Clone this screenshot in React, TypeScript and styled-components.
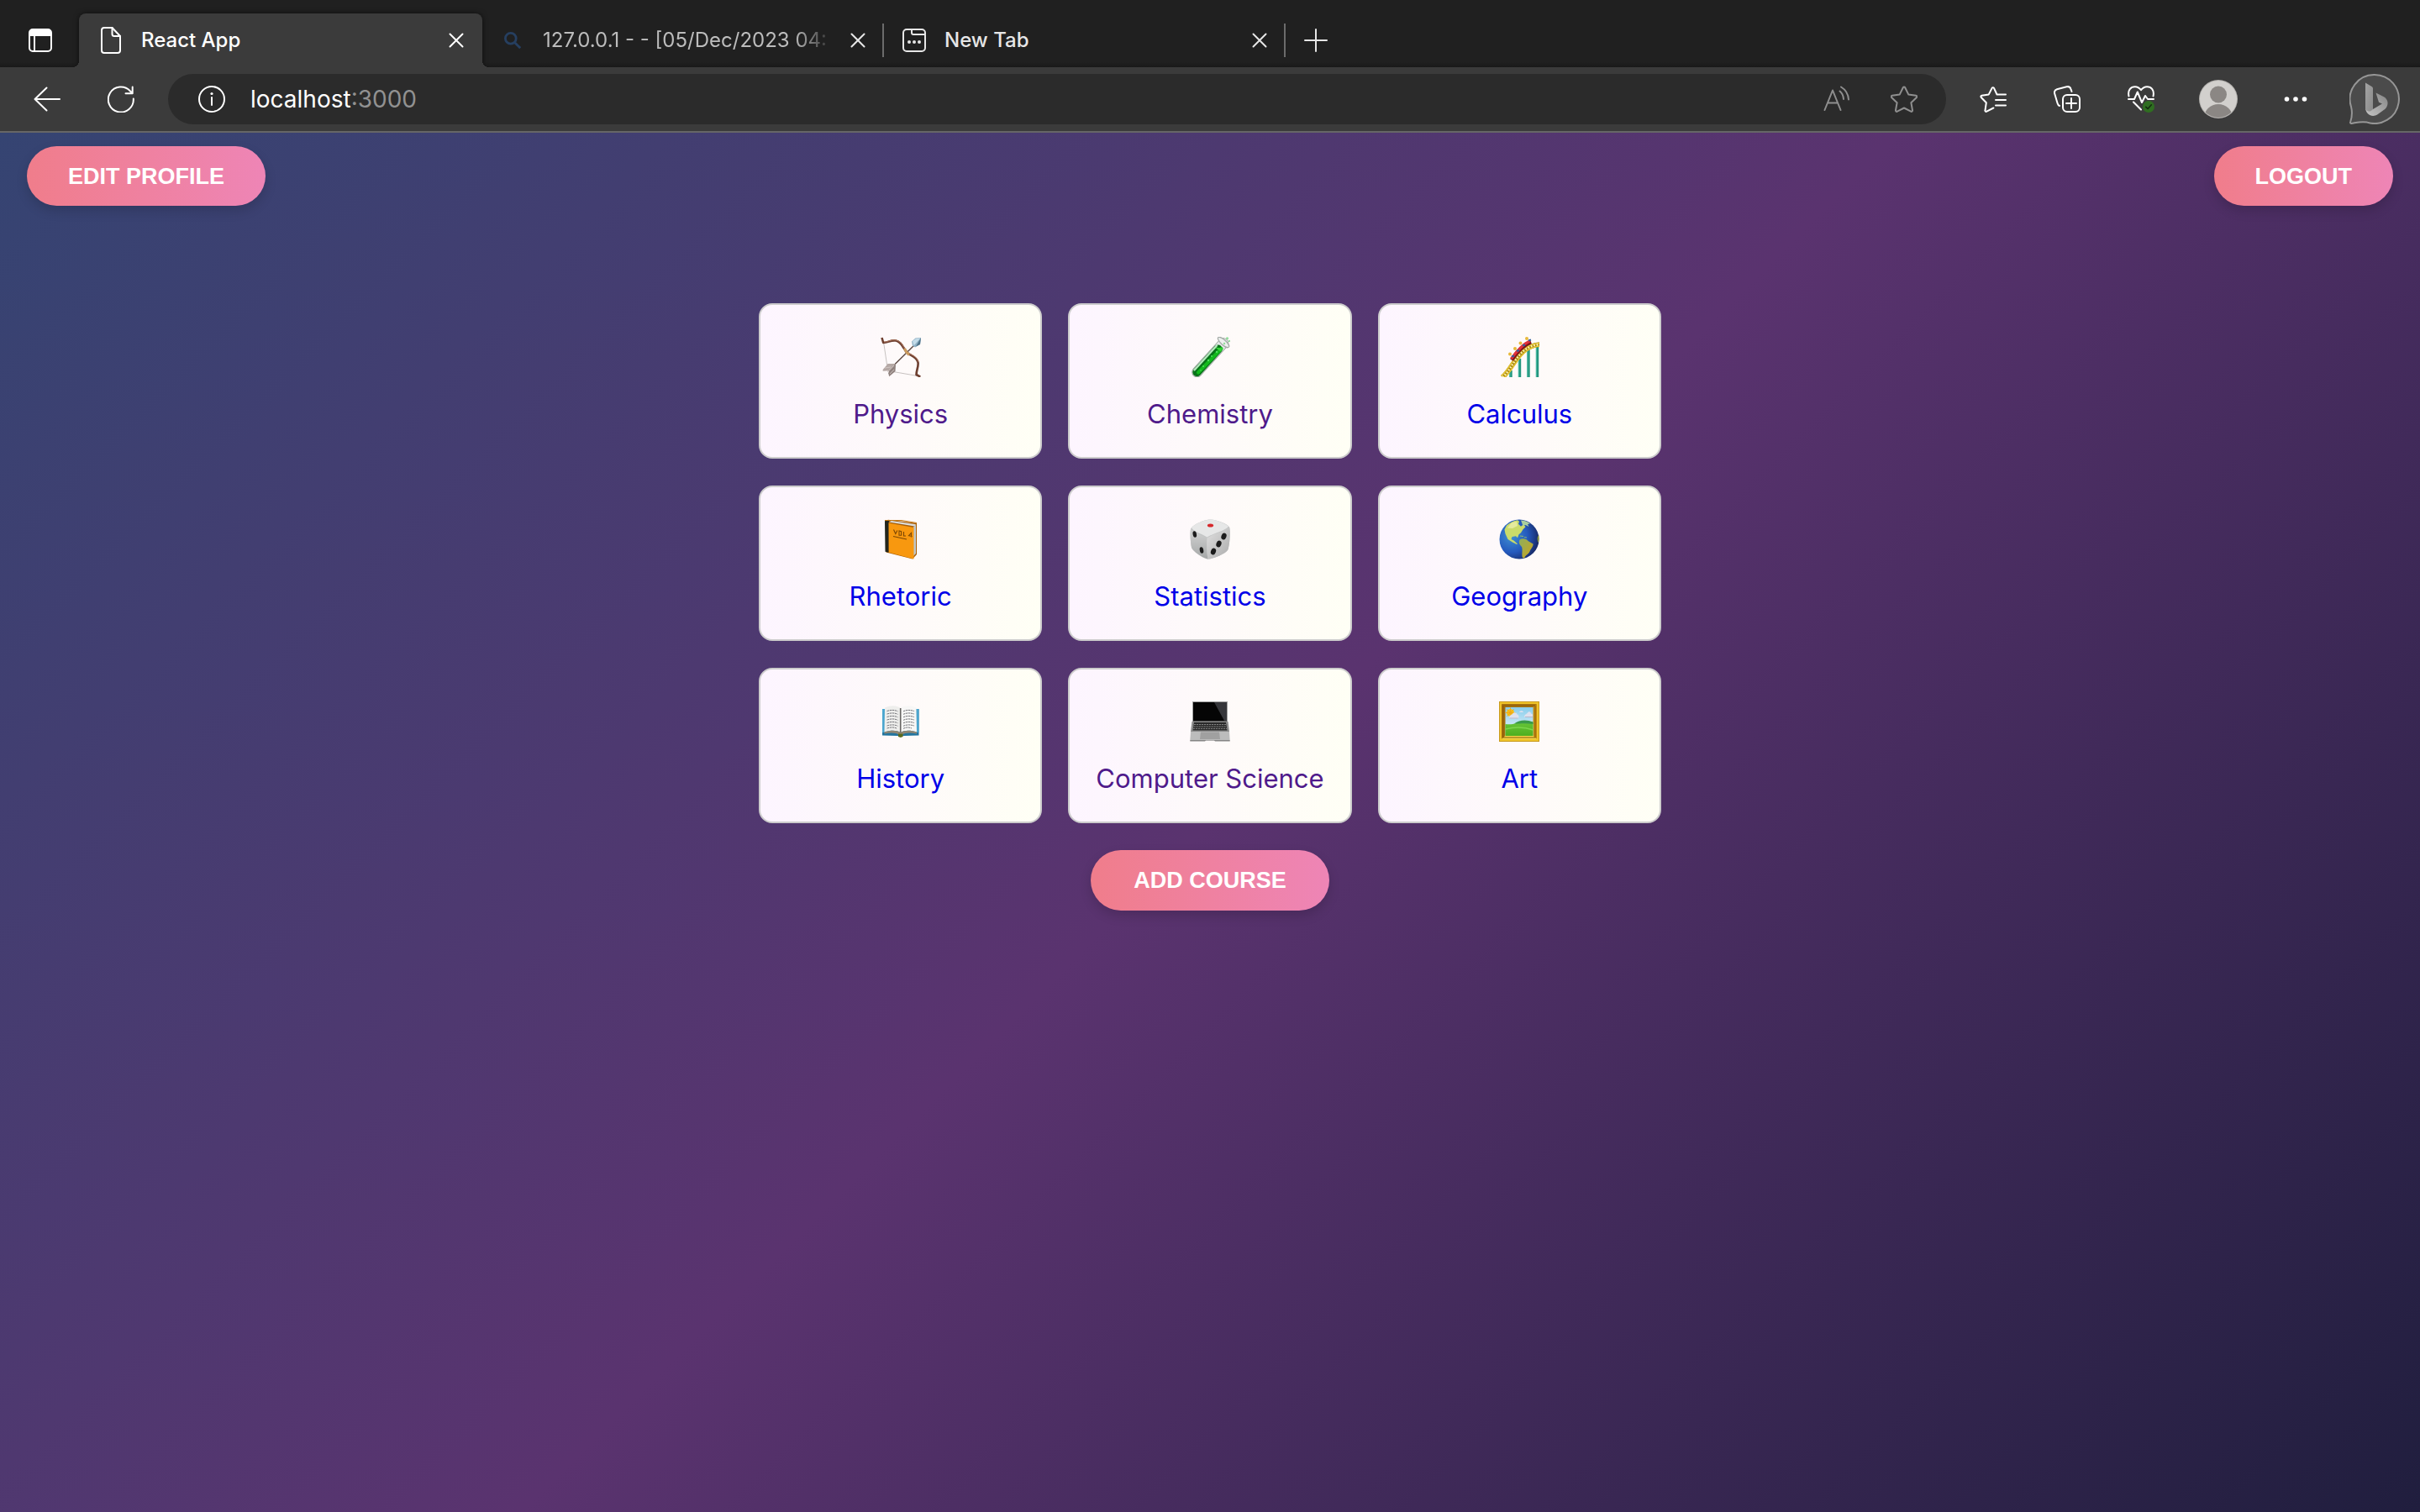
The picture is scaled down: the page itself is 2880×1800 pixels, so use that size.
import React from "react";
import styled, { createGlobalStyle, css } from "styled-components";

const uiFont = `Inter, "Liberation Sans", sans-serif`;

const GlobalStyle = createGlobalStyle`
  * { box-sizing: border-box; }
  html, body, #root { height: 100%; }
  body { margin: 0; font-family: ${uiFont}; background: #211f3f; }
  button, input { font-family: inherit; }
`;

const Window = styled.div`
  display: flex;
  flex-direction: column;
  min-height: 100vh;
`;

/* ---------- browser chrome ---------- */

const TabStrip = styled.header`
  display: flex;
  height: 80px;
  background: linear-gradient(to top, #191919, #202020 6px);
  overflow: hidden;
`;

const IconButton = styled.button<{ $w?: number; $color?: string }>`
  display: flex;
  flex: none;
  align-items: center;
  justify-content: center;
  width: ${(p) => p.$w ?? 32}px;
  padding: 0;
  border: 0;
  background: none;
  color: ${(p) => p.$color ?? "#ffffff"};
  cursor: pointer;
`;

const StripButton = styled(IconButton)`
  padding: 16px 0 0 2px;
`;

const activeTab = css`
  width: 480px;
  padding-left: 22px;
  padding-right: 15px;
  background: #3b3b3b;
  color: #ffffff;
  border-radius: 8px 8px 0 0;
  box-shadow: 0 0 6px rgba(0, 0, 0, 0.6);

  &::before,
  &::after {
    content: "";
    position: absolute;
    bottom: 0;
    width: 8px;
    height: 8px;
  }
  &::before {
    left: -8px;
    background: radial-gradient(circle at 0 0, transparent 8px, #3b3b3b 8px);
  }
  &::after {
    right: -8px;
    background: radial-gradient(circle at 100% 0, transparent 8px, #3b3b3b 8px);
  }
`;

const restingTab = css`
  width: 478px;
  padding-left: 20px;
  color: #e6e6e6;

  &::after {
    content: "";
    width: 2px;
    height: 40px;
    margin-left: 13px;
    background: #6b6b6b;
  }
`;

const Tab = styled.div<{ $active?: boolean }>`
  position: relative;
  display: flex;
  align-items: center;
  height: 64px;
  margin-top: 16px;
  ${(p) => (p.$active ? activeTab : restingTab)}
`;

const TabIcon = styled.span`
  display: flex;
  flex: none;
  justify-content: center;
  width: 32px;
  margin-right: 20px;
`;

const TabTitle = styled.span<{ $faded?: boolean }>`
  flex: 1;
  min-width: 0;
  margin-right: 12px;
  overflow: hidden;
  white-space: nowrap;
  font-size: 24px;
  font-weight: 500;
  line-height: 32px;
  ${(p) =>
    p.$faded &&
    css`
      color: #bcbcbc;
      font-weight: 400;
      mask-image: linear-gradient(to left, transparent, #000 48px);
    `}
`;

const Toolbar = styled.nav`
  position: relative;
  display: flex;
  align-items: stretch;
  height: 78px;
  padding: 0 4px 0 12px;
  background: #3b3b3b;
  border-bottom: 2px solid #666666;
`;

const AddressBar = styled.form`
  display: flex;
  flex: 1;
  align-items: center;
  height: 60px;
  margin: 8px 12px 0;
  padding: 0 34px 0 36px;
  border-radius: 30px;
  background: #2b2b2b;
`;

const AddressField = styled.label`
  display: flex;
  flex: 1;
  align-items: center;
  margin-left: 30px;
  font-size: 28px;
  line-height: 36px;
  color: #919191;
`;

const AddressInput = styled.input`
  field-sizing: content;
  padding: 0;
  border: 0;
  outline: 0;
  background: none;
  font-size: 28px;
  line-height: 36px;
  color: #ffffff;
`;

const AddressActions = styled.div`
  display: flex;
  gap: 48px;
`;

/* ---------- page ---------- */

const Page = styled.main`
  display: flex;
  flex: 1;
  flex-direction: column;
  align-items: center;
  background: linear-gradient(135deg, #354472 0%, #5a336f 50%, #201e3e 100%);
`;

const PageHeader = styled.div`
  display: flex;
  justify-content: space-between;
  align-self: stretch;
  padding: 16px 32px;
`;

const PillButton = styled.button<{ $large?: boolean }>`
  height: ${(p) => (p.$large ? 72 : 71)}px;
  padding: 0 ${(p) => (p.$large ? 51 : 49)}px;
  border: 0;
  border-radius: 36px;
  background: linear-gradient(90deg, #f07d8b, #ee85b6);
  box-shadow: 0 6px 14px rgba(0, 0, 0, 0.15);
  color: #ffffff;
  font-family: "Liberation Sans", Arial, sans-serif;
  font-size: 27px;
  font-weight: 700;
  line-height: 32px;
  text-transform: uppercase;
  cursor: pointer;
`;

const CourseGrid = styled.div`
  display: grid;
  grid-template-columns: repeat(3, 1fr);
  gap: 32px 31px;
  width: 100%;
  max-width: 1074px;
  margin: 100px 0 32px;
`;

const CourseCard = styled.a<{ $visited?: boolean }>`
  display: flex;
  flex-direction: column;
  align-items: center;
  gap: 24px;
  padding: 38px 16px 31px;
  border: 2px solid #cccccc;
  border-radius: 16px;
  background: linear-gradient(90deg, #fdf5ff, #fffff5);
  color: ${(p) => (p.$visited ? "#4f1a8b" : "#0000e8")};
  font-size: 31px;
  line-height: 40px;
  text-decoration: none;
  white-space: nowrap;
`;

/* ---------- chrome icons ---------- */

type IconProps = { w?: number; h?: number; sw?: number; children: React.ReactNode };

const Line = ({ w = 32, h = 32, sw = 2, children }: IconProps) => (
  <svg
    width={w}
    height={h}
    viewBox={`0 0 ${w} ${h}`}
    fill="none"
    stroke="currentColor"
    strokeWidth={sw}
    strokeLinecap="round"
    strokeLinejoin="round"
    aria-hidden="true"
  >
    {children}
  </svg>
);

const CloseIcon = () => (
  <Line w={18} h={18}>
    <path d="M1.500 1.500l15 15M16.500 1.500l-15 15" />
  </Line>
);

const SidebarIcon = () => (
  <Line w={28} h={28}>
    <rect x="1" y="1" width="26" height="26" rx="4" />
    <path d="M2 5a3 3 0 013-3h18a3 3 0 013 3v3H2z" fill="currentColor" />
    <path d="M7 9v18" />
  </Line>
);

const FileIcon = () => (
  <Line w={24} h={32}>
    <path d="M4 1h9.500l9.500 10v17a3 3 0 01-3 3H4a3 3 0 01-3-3V4a3 3 0 013-3z" />
    <path d="M13.500 1v7.500a2.500 2.500 0 002.500 2.500h7" />
  </Line>
);

const SearchIcon = () => (
  <svg width="20" height="20" viewBox="0 0 20 20" fill="none" stroke="#263f60" strokeWidth="2.800" aria-hidden="true">
    <circle cx="7.800" cy="7.800" r="6.400" />
    <path d="M12.400 12.400l6.800 6.800" />
  </svg>
);

const NewTabIcon = () => (
  <Line w={28} h={28}>
    <rect x="1" y="1" width="26" height="26" rx="4" />
    <path d="M11 1v4a2 2 0 002 2h14" />
    <g fill="currentColor" stroke="none">
      <circle cx="8" cy="16" r="2" />
      <circle cx="14" cy="16" r="2" />
      <circle cx="20" cy="16" r="2" />
    </g>
  </Line>
);

const PlusIcon = () => (
  <Line w={28} h={28}>
    <path d="M14 1v26M1 14h26" />
  </Line>
);

const BackIcon = () => (
  <Line>
    <path d="M15.500 2.500L1.500 16l14 13.500M2 16h29" />
  </Line>
);

const ReloadIcon = () => (
  <Line>
    <path d="M30.800 15.500A15 15 0 1 1 27 6.500L29.500 9M29.700 1.500V9.200H21.500" />
  </Line>
);

const InfoIcon = () => (
  <Line>
    <circle cx="16" cy="16" r="15" />
    <path d="M16 14v9" />
    <circle cx="16" cy="9.500" r="1.600" fill="currentColor" stroke="none" />
  </Line>
);

const ReadAloudIcon = () => (
  <Line>
    <path d="M1.500 29L11 5.500 20.500 29M5 20.500h12" />
    <path d="M19.500 6.500c2.500 2 4.200 5 4.500 9.500M21 1.500c5 3 8.500 8 9 15" />
  </Line>
);

const StarIcon = () => (
  <Line>
    <path d="M14.800 2.200c.5-1 1.900-1 2.400 0l4 8.200 9 1.300c1.100.2 1.500 1.500.7 2.300l-6.500 6.300 1.600 9c.2 1.100-1 1.900-1.900 1.400L16 26.500l-8.100 4.200c-.9.500-2.100-.3-1.900-1.400l1.600-9L1.100 14c-.8-.8-.4-2.100.7-2.300l9-1.300z" />
  </Line>
);

const FavoritesIcon = () => (
  <Line>
    <path d="M20.500 10.500L17 2.900c-.5-1-1.900-1-2.400 0l-3.800 7.500-8.300 1.300c-1.100.2-1.500 1.500-.7 2.300l6 6.300-1.300 9c-.2 1.100.9 1.900 1.900 1.400l8-4.200M20.500 10.500H31M19 17h12M19 23.500h12" />
  </Line>
);

const CollectionsIcon = () => (
  <Line>
    <rect x="11" y="11" width="20" height="20" rx="5" />
    <path d="M21 15v12M15 21h12" />
    <path d="M7 24c-1.300-.5-2-1.500-2.400-3L1.200 9.500C.5 7 1.800 5 4 4.300L15.500 1.300c2.500-.6 4.300.6 5 2.800L21.500 7" />
  </Line>
);

const HealthIcon = () => (
  <Line>
    <path d="M1.500 12.500C-.2 5 4 1.200 8.800 1.200c3 0 5.300 1.500 7.200 4 1.900-2.500 4.200-4 7.200-4 4.800 0 9 3.800 7.300 11.300" />
    <path d="M1 16h7l3.800-8.500L17 20l4-8 3 4h7M7 19.500l9 9" />
    <circle cx="25" cy="25" r="7" fill="#2f6e21" stroke="none" />
    <path d="M21.800 25.300l2.300 2.200 4.200-4.700" stroke="#142c10" strokeWidth="1.600" />
  </Line>
);

const AvatarIcon = () => (
  <svg width="46" height="46" viewBox="0 0 46 46" aria-hidden="true">
    <defs>
      <clipPath id="avatar">
        <circle cx="23" cy="23" r="22" />
      </clipPath>
    </defs>
    <circle cx="23" cy="23" r="23" fill="#b4b2af" />
    <circle cx="23" cy="23" r="22" fill="#d2d0cd" />
    <circle cx="23" cy="17.500" r="10" fill="#8b8784" />
    <ellipse cx="23" cy="45" rx="17" ry="16" fill="#8b8784" clipPath="url(#avatar)" />
  </svg>
);

const DotsIcon = () => (
  <svg width="28" height="8" viewBox="0 0 28 8" fill="currentColor" aria-hidden="true">
    <circle cx="3.500" cy="4" r="2.800" />
    <circle cx="14" cy="4" r="2.800" />
    <circle cx="24.500" cy="4" r="2.800" />
  </svg>
);

const BingIcon = () => (
  <svg width="60" height="60" viewBox="0 0 60 60" aria-hidden="true">
    <defs>
      <linearGradient id="bing" x1="0" y1="0" x2="1" y2="1">
        <stop offset="0" stopColor="#a4a4a4" />
        <stop offset="1" stopColor="#8a8a8a" />
      </linearGradient>
      <linearGradient id="bingTail" x1="0" y1="1" x2="1" y2="0">
        <stop offset="0" stopColor="#c4c4c4" />
        <stop offset="1" stopColor="#858585" />
      </linearGradient>
    </defs>
    <path
      d="M30 1a29 29 0 1 1-9 56.600c-7-1.500-13 .4-18.600 1.300C1 59.200.8 58 1.200 57c2-6 2.300-12 .8-18A29 29 0 0 1 30 1z"
      fill="#4b4b4b"
      stroke="#969696"
      strokeWidth="2"
    />
    <path d="M31.500 22.500l9.500 4.800c5.500 3 6 10 1.500 14.500l-9 6.500c-6.500 4-13.500 0-14.500-7l9 .8 11-6.500-4-1.800z" fill="url(#bingTail)" />
    <path d="M19 10.500l7.500 4.500c1 .6 1.500 1.400 1.500 2.500v24.500c-3 3.500-7 3.500-9-.5z" fill="url(#bing)" />
  </svg>
);

/* ---------- course pictures ---------- */

const Picture = ({ children }: { children: React.ReactNode }) => (
  <svg width="48" height="48" viewBox="0 0 48 48" fill="none" aria-hidden="true">
    {children}
  </svg>
);

const BowArrow = () => (
  <Picture>
    <path d="M3.700 7.300L7.700 34M16 41.700L44 46.500" stroke="#b9b4b2" strokeWidth=".8" />
    <path d="M1.500 1l1.700 6C9 7 12 3.600 18 4.500c8 1.500 8 9.500 14.500 15 4.500 3.500 10.500 4.500 12 11 .9 4.500-2 9.500-2 14.500l4.800 2.700" stroke="#6d3f30" strokeWidth="2.600" strokeLinejoin="round" />
    <path d="M4 6.200C9 6 12 2.900 18 3.800c8 1.500 8.500 9.500 15 15 4.500 3.500 10.500 4.500 12 11" stroke="#b07a62" strokeWidth="1" />
    <path d="M9 40.500L40.500 9.500" stroke="#5a4640" strokeWidth="1.400" />
    <path d="M28.500 14c1 3 3 5.500 5.500 7.500" stroke="#c99a5e" strokeWidth="3.200" />
    <path d="M37 5.500l4.500-4L48 1l-1 8-6 3.500-3-2z" fill="#8fb0c4" />
    <path d="M38 5l4-2.800L47.500 1.500l-8 9z" fill="#c3dce9" />
    <path d="M42 11.500L48 1l-1 8z" fill="#4f7388" />
    <path d="M2.700 39l6-7H18l-8 8.300-7.300.5z" fill="#b5a8a5" />
    <path d="M10 40.500l8-8-.5 8.500-7.300 6.300-1-4z" fill="#918380" />
    <path d="M8 42l8-8M5 37l7-1M11 44l5-5" stroke="#d5cbc8" strokeWidth=".8" />
  </Picture>
);

const TestTube = () => (
  <Picture>
    <path d="M8.500 42L40 7.500" stroke="#8d9690" strokeWidth="12.400" strokeLinecap="round" />
    <path d="M8.500 42L40 7.500" stroke="#e4e8e6" strokeWidth="11" strokeLinecap="round" />
    <path d="M8.500 42L33.500 14.600" stroke="#087319" strokeWidth="10.400" strokeLinecap="round" />
    <path d="M10 42.500L37.500 14" stroke="#12b91c" strokeWidth="4" strokeLinecap="round" />
    <path d="M30 12.500l9.500 1-3 4z" fill="#35d437" />
    <path d="M5.500 39.500L32 10.500" stroke="#b5e6bd" strokeWidth="2.200" strokeLinecap="round" />
    <g fill="#4ce25e">
      <circle cx="16" cy="35" r="1" />
      <circle cx="22" cy="28" r="1.200" />
      <circle cx="26" cy="23" r="1" />
      <circle cx="32" cy="18" r="1.200" />
      <circle cx="13" cy="40" r=".8" />
    </g>
    <ellipse cx="40" cy="6.500" rx="8.500" ry="3" transform="rotate(42 40 6.500)" fill="#edf0ee" stroke="#a3aaa6" strokeWidth="1.200" />
    <circle cx="44.500" cy="1.800" r="1.600" fill="#93dd9c" />
    <circle cx="47" cy="5" r="1.200" fill="#93dd9c" />
    <circle cx="41" cy="8" r="1.200" fill="#93dd9c" />
  </Picture>
);

const RollerCoaster = () => (
  <Picture>
    <path d="M14 40v8M24.500 26v22M35 15v33M45.500 10v38" stroke="#24967f" strokeWidth="3.400" />
    <path d="M13 40v8M23.500 26v22M34 15v33M44.500 10v38" stroke="#4dbda5" strokeWidth=".9" />
    <path d="M4 48C17 38 22 11 48.500 9" stroke="#a88710" strokeWidth="5.800" />
    <path d="M2.500 46.500C15 37 20 10 48 7.500M6 48.500C19 40 24 13 48.500 11" stroke="#e9c834" strokeWidth="1.400" />
    <path d="M4 48C17 38 22 11 48.500 9" stroke="#fff2ae" strokeWidth="2.400" strokeDasharray="1.800 1.800" />
    <path d="M15 27.500C20 20 28 10 38 6" stroke="#7c1418" strokeWidth="4.600" />
    <path d="M14.500 26C20 18.500 27 9.500 36.500 5" stroke="#e0303a" strokeWidth="3.200" />
    <g fill="#e8b93a">
      <circle cx="13" cy="20.500" r="2" />
      <circle cx="19" cy="14" r="2" />
      <circle cx="25.500" cy="7.500" r="2" />
      <circle cx="33" cy="2" r="2" />
    </g>
    <path d="M15 23.500l3-1M21 17l3-1M28 10.500l3-1M35 4.500l3-1" stroke="#2e5f9e" strokeWidth="2" />
  </Picture>
);

const OrangeBook = () => (
  <Picture>
    <path d="M6 2l3-1.200 34 4V42l-5 5.500L6.500 39.500z" fill="#a85f08" />
    <path d="M10 3.500l30.500 5L42 6.300 13 2z" fill="#d9dcdc" />
    <path d="M38.500 10l3.500-3.500V41l-3.500 3.500z" fill="#bfc6c8" />
    <path d="M9 4.500L39.500 10v37.500L9.500 39.500z" fill="#f8980f" />
    <path d="M5 2.500C6 .8 8 .8 10.500 1L9.500 4.500V39.800L5.500 38.800z" fill="#23251c" />
    <path d="M15.500 12.500l2.300 5 2-4M22 14v5.200h2.600V14.600zM27.500 15v5h2.500M36.500 21.500v-5l-3 3.200 4 .8M15 20.500l16 3.500" stroke="#7c4704" strokeWidth="1.100" />
    <path d="M5 1.500h20l18 3" stroke="#c67a17" strokeWidth="1" />
  </Picture>
);

const Die = () => (
  <Picture>
    <defs>
      <linearGradient id="dieRight" x1="0" y1="0" x2="1" y2="1">
        <stop offset="0" stopColor="#e0e0e0" />
        <stop offset="1" stopColor="#acacac" />
      </linearGradient>
      <linearGradient id="dieLeft" x1="0" y1="0" x2="0" y2="1">
        <stop offset="0" stopColor="#d2d3d3" />
        <stop offset="1" stopColor="#a5a7a7" />
      </linearGradient>
    </defs>
    <path d="M1 12C2 7 18 0 25 .5 32 1 45 5.500 47 9.500c1.500 4 .5 20-1.500 26.500C44 40.500 28 47.500 22 47.500S3 38 2 33.500 0 17 1 12z" fill="#c4c6c6" />
    <path d="M1 12c4 4 12 7 19.500 10.500C20 30 20 40 21.500 47.500 16 46.500 3 38 2 33.500S0 17 1 12z" fill="url(#dieLeft)" />
    <path d="M20.500 22.500C27 18 40 15 47 9.500c1.500 4 .5 20-1.500 26.500C44 40.500 28 47.500 21.500 47.500 20 40 20 30 20.500 22.500z" fill="url(#dieRight)" />
    <path d="M2 10C7 4.500 20 .5 25 .5S42 5 46 8.500C44 13 28 17 20.500 21.500 14 17 4 15 2 10z" fill="#e6e7e7" />
    <ellipse cx="24.500" cy="7.500" rx="3.600" ry="2" fill="#d6282c" />
    <g fill="#1c1c1c">
      <ellipse cx="5.800" cy="18" rx="2.200" ry="3.800" transform="rotate(-12 5.800 18)" />
      <ellipse cx="14" cy="37" rx="2.200" ry="3.800" transform="rotate(-12 14 37)" />
      <ellipse cx="40.500" cy="20.500" rx="3" ry="4" transform="rotate(20 40.500 20.500)" />
      <ellipse cx="34.500" cy="29.500" rx="3" ry="4" transform="rotate(20 34.500 29.500)" />
      <ellipse cx="28" cy="38.500" rx="3" ry="4" transform="rotate(20 28 38.500)" />
    </g>
  </Picture>
);

const Globe = () => (
  <Picture>
    <defs>
      <radialGradient id="ocean" cx=".3" cy=".42" r=".75">
        <stop offset="0" stopColor="#3f8fd2" />
        <stop offset=".55" stopColor="#2459bd" />
        <stop offset="1" stopColor="#16235c" />
      </radialGradient>
      <linearGradient id="south" x1="0" y1="0" x2="1" y2="1">
        <stop offset="0" stopColor="#8fae5c" />
        <stop offset="1" stopColor="#c9a51f" />
      </linearGradient>
    </defs>
    <circle cx="24" cy="24" r="23.500" fill="url(#ocean)" />
    <path d="M9 7.500C13 4 17 2 22 1.200l2 1.500-1 3 3 3 3-2.500 2.500 3-3 3-2.500 4-2.500 2-1.500 4-2-2-4.500.8-1 3 3 1.500 2.500 2.300 2 1.700-1 .5-5-2.500-5.500-3.500-3-6.500-1-5z" fill="#cadb6a" />
    <path d="M15 4l6-1 1 5-6 3-6-.5z" fill="#e4ea9d" />
    <path d="M26 1.500c4 0 8 1.500 11 4l-3 .5 1.500 3-4-2-3 1z" fill="#a9cf9e" />
    <path d="M25 20l4 .7M30 21.500l3 .5" stroke="#86b079" strokeWidth="1.200" />
    <path d="M24.500 24.500c3-2 8-1.500 10 1.500l6 3.500c.5 3-3 6-4 9s-5 4-6.500 8L28 46c-1.500-4 .5-9-1-13-2.500-2.500-4-5-2.500-8.500z" fill="url(#south)" />
    <path d="M47.300 19c-2.300 2-2 6.500-.5 9 .8-3 .9-6 .5-9z" fill="#8c9a35" />
  </Picture>
);

const OpenBook = () => (
  <Picture>
    <path d="M2 9h43.500v31.500l-18 .5-3.700 1-3.600-1L2 40.500z" fill="#23759f" />
    <path d="M2 9h3v28H2zM42.500 9h3v28h-3z" fill="#4ba6cf" />
    <path d="M5 7.500C12 4.500 19 4.500 23.700 8v29C19 34 12 34 4.500 36.500z" fill="#eeeeec" />
    <path d="M42.500 7.500c-7-3-14-3-18.800.5v29c4.700-3 11.800-3 19.300-.5z" fill="#f7f7f6" />
    <path d="M4.500 36.500C12 34 19 34 23.700 37c4.700-3 11.800-3 19.300-.5v2c-7-1.500-14-1.500-17.500 1.500h-3.600c-3.500-3-10.400-3-17.400-1.500z" fill="#8f8674" />
    <path d="M21 38.500h5.500v3.500l-2.700 1-2.800-1z" fill="#5c6b1d" />
    <path d="M23.700 8v29" stroke="#686664" strokeWidth="1.600" />
    <path
      d="M7.500 11.500c5-1.500 9-1.500 13 .3M7.500 15c5-1.500 9-1.500 13 .3M7.500 18.500c5-1.500 9-1.500 13 .3M7.500 22c5-1.500 9-1.500 13 .3M7.500 25.500c5-1.500 9-1.500 13 .3M7.500 29c5-1.500 9-1.500 13 .3M7.500 32c5-1.500 9-1.500 12 .3M27 11.800c4-1.800 8-1.800 13-.3M27 15.300c4-1.800 8-1.800 13-.3M27 18.800c4-1.800 8-1.800 13-.3M27 22.300c4-1.800 8-1.800 13-.3M27 25.800c4-1.800 8-1.800 13-.3M27 29.300c4-1.800 8-1.800 13-.3M27 32.300c4-1.800 6-1.800 10-.3"
      stroke="#77777c"
      strokeWidth="1"
      strokeDasharray="2.500 .6"
    />
  </Picture>
);

const Laptop = () => (
  <Picture>
    <path d="M3 0h42v24H3z" fill="#a3a3a3" />
    <path d="M4 1h40v22.500H4z" fill="#050505" />
    <path d="M29 1h15v22h-3z" fill="#35363a" />
    <path d="M2.500 24h43L47 36H1z" fill="#8c8c8c" />
    <path d="M5 25h38l1.500 9.500h-41z" fill="#2a2a2a" />
    <path d="M5 27.500h38M4.500 30h39M4 32.400h40" stroke="#8c8c8c" strokeWidth=".9" strokeDasharray="2.200 .8" />
    <path d="M1 36h46l.7 10.500H.300z" fill="#bcbcbc" />
    <path d="M13 36.500h22l1 8.500H12z" fill="#a0a0a0" />
    <path d="M.3 46h47.400v1.500H30l-1-1H19l-1 1H.300z" fill="#858585" />
  </Picture>
);

const FramedPicture = () => (
  <Picture>
    <defs>
      <linearGradient id="sky" x1="0" y1="0" x2="0" y2="1">
        <stop offset="0" stopColor="#88cdec" />
        <stop offset="1" stopColor="#f1f8fb" />
      </linearGradient>
      <linearGradient id="field" x1="0" y1="0" x2="0" y2="1">
        <stop offset="0" stopColor="#69c83c" />
        <stop offset="1" stopColor="#4fae1f" />
      </linearGradient>
    </defs>
    <rect width="48" height="48" fill="#c99a1c" />
    <rect x="1" y="1" width="46" height="46" fill="#efc42a" />
    <path d="M3 3h42l-5 5H8z" fill="#a8730f" />
    <path d="M3 3l5 4v33l-5 5z" fill="#a36c0d" />
    <path d="M45 3l-5 4v33l5 5z" fill="#c48c14" />
    <path d="M3 45l5-4h32l5 4z" fill="#f3d448" />
    <rect x="5" y="5" width="38" height="38" stroke="#8a5a0a" strokeWidth="1" />
    <rect x="7.500" y="7" width="33" height="34" fill="url(#sky)" />
    <path d="M7.500 41V27c9 1.500 14-2 20-3.500 5-1 9 .5 13 1V41z" fill="url(#field)" />
    <path d="M18 26.500c6-4.500 14-5.500 22.500-2V27c-8-1.500-16-.5-22.500-.5z" fill="#3a9a4a" />
    <path d="M7.500 33c12-3 22-3 33 1" stroke="#7bd64c" strokeWidth="1.500" />
    <circle cx="13.500" cy="13.500" r="4.600" fill="#f6c318" />
    <path d="M13.500 7.500v12M7.500 13.500h12M9.300 9.300l8.400 8.400M17.700 9.300l-8.400 8.400" stroke="#f0a91a" strokeWidth="1" />
    <path d="M12 19c0-2.500 3-3 4-4 1-2.500 5-2.500 5.500.5 2.500.5 3 4.500 0 5H14c-1.500 0-2-.7-2-1.500zM30 17.500c1-2.500 3-2 4-4 1.500-2 3.500-1.500 4 1l2 1v3.500h-8c-1.500 0-2-.7-2-1.500zM24 13c.7-2 4.500-2.500 5 0z" fill="#dfe1ee" />
    <path d="M12.500 20h10M31 18.500h9" stroke="#b6b8cc" strokeWidth="1" />
  </Picture>
);

/* ---------- data ---------- */

const courses: { name: string; picture: React.ReactNode; visited?: boolean }[] = [
  { name: "Physics", picture: <BowArrow />, visited: true },
  { name: "Chemistry", picture: <TestTube />, visited: true },
  { name: "Calculus", picture: <RollerCoaster /> },
  { name: "Rhetoric", picture: <OrangeBook /> },
  { name: "Statistics", picture: <Die /> },
  { name: "Geography", picture: <Globe /> },
  { name: "History", picture: <OpenBook /> },
  { name: "Computer Science", picture: <Laptop />, visited: true },
  { name: "Art", picture: <FramedPicture /> },
];

const tabs = [
  { title: "React App", icon: <FileIcon />, active: true },
  { title: "127.0.0.1 - - [05/Dec/2023 04:", icon: <SearchIcon />, faded: true },
  { title: "New Tab", icon: <NewTabIcon /> },
];

export default function App() {
  return (
    <Window>
      <GlobalStyle />
      <TabStrip>
        <StripButton $w={94} aria-label="Tab actions">
          <SidebarIcon />
        </StripButton>
        {tabs.map((tab) => (
          <Tab key={tab.title} $active={tab.active}>
            <TabIcon>{tab.icon}</TabIcon>
            <TabTitle $faded={tab.faded}>{tab.title}</TabTitle>
            <IconButton aria-label="Close tab" $color={tab.active ? "#ffffff" : "#e6e6e6"}>
              <CloseIcon />
            </IconButton>
          </Tab>
        ))}
        <StripButton $w={70} $color="#e6e6e6" aria-label="New tab">
          <PlusIcon />
        </StripButton>
      </TabStrip>

      <Toolbar>
        <IconButton $w={88} aria-label="Back">
          <BackIcon />
        </IconButton>
        <IconButton $w={88} aria-label="Reload">
          <ReloadIcon />
        </IconButton>
        <AddressBar onSubmit={(e) => e.preventDefault()}>
          <IconButton type="button" aria-label="Site information">
            <InfoIcon />
          </IconButton>
          <AddressField>
            <AddressInput type="text" aria-label="Address" defaultValue="localhost" />
            <span>:3000</span>
          </AddressField>
          <AddressActions>
            <IconButton type="button" $color="#8f8f8f" aria-label="Read aloud">
              <ReadAloudIcon />
            </IconButton>
            <IconButton type="button" $color="#8f8f8f" aria-label="Add to favourites">
              <StarIcon />
            </IconButton>
          </AddressActions>
        </AddressBar>
        <IconButton $w={88} aria-label="Favourites">
          <FavoritesIcon />
        </IconButton>
        <IconButton $w={88} aria-label="Collections">
          <CollectionsIcon />
        </IconButton>
        <IconButton $w={88} aria-label="Browser essentials">
          <HealthIcon />
        </IconButton>
        <IconButton $w={96} aria-label="Profile">
          <AvatarIcon />
        </IconButton>
        <IconButton $w={88} aria-label="More">
          <DotsIcon />
        </IconButton>
        <IconButton $w={100} aria-label="Bing chat">
          <BingIcon />
        </IconButton>
      </Toolbar>

      <Page>
        <PageHeader>
          <PillButton>Edit Profile</PillButton>
          <PillButton>Logout</PillButton>
        </PageHeader>
        <CourseGrid>
          {courses.map((course) => (
            <CourseCard key={course.name} href={`#${course.name}`} $visited={course.visited}>
              {course.picture}
              <span>{course.name}</span>
            </CourseCard>
          ))}
        </CourseGrid>
        <PillButton $large>Add Course</PillButton>
      </Page>
    </Window>
  );
}
